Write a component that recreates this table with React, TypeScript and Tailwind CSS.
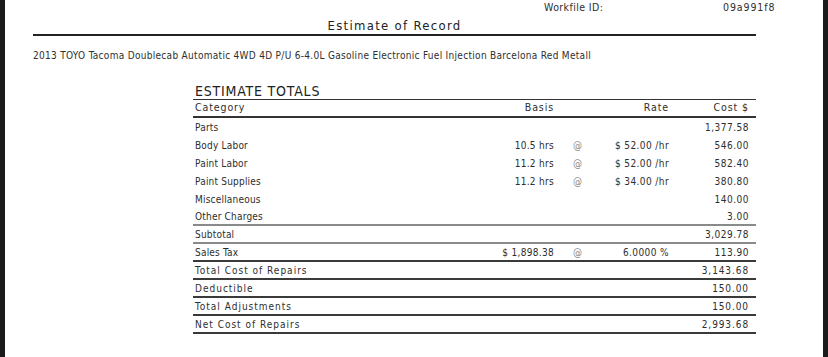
import React from 'react';

type Row = {
  label: string;
  basis?: string;
  at?: boolean;
  rate?: string;
  cost: string;
  line?: 'none' | 'gray' | 'dark';
  wide?: boolean;
};

const ROWS: Row[] = [
  { label: 'Parts', cost: '1,377.58' },
  { label: 'Body Labor', basis: '10.5 hrs', at: true, rate: '$ 52.00 /hr', cost: '546.00' },
  { label: 'Paint Labor', basis: '11.2 hrs', at: true, rate: '$ 52.00 /hr', cost: '582.40' },
  { label: 'Paint Supplies', basis: '11.2 hrs', at: true, rate: '$ 34.00 /hr', cost: '380.80' },
  { label: 'Miscellaneous', cost: '140.00' },
  { label: 'Other Charges', cost: '3.00', line: 'gray' },
  { label: 'Subtotal', cost: '3,029.78', line: 'gray' },
  { label: 'Sales Tax', basis: '$ 1,898.38', at: true, rate: '6.0000 %', cost: '113.90', line: 'dark' },
  { label: 'Total Cost of Repairs', cost: '3,143.68', line: 'dark', wide: true },
  { label: 'Deductible', cost: '150.00', line: 'dark', wide: true },
  { label: 'Total Adjustments', cost: '150.00', line: 'dark', wide: true },
  { label: 'Net Cost of Repairs', cost: '2,993.68', line: 'dark', wide: true },
];

const font = { fontFamily: '"DejaVu Sans Condensed", "Liberation Sans", sans-serif' };

export default function App() {
  return (
    <div className="w-[828px] h-[357px] bg-[#1b1b1b] flex px-[5px] overflow-hidden" style={font}>
      <div className="flex-1 bg-white text-[#2e2e2e] flex flex-col">
        <div className="flex h-[14px] pl-[539px] text-[10.5px] leading-[14px] tracking-[0.4px]">
          <span className="w-[179px]">Workfile ID:</span>
          <span className="tracking-[0.9px]">09a991f8</span>
        </div>
        <div className="ml-[28px] w-[723px] h-[22px] border-b-2 border-[#222] text-center text-[13px] leading-[24px] tracking-[1.3px] text-[#222]">
          Estimate of Record
        </div>
        <div className="ml-[28px] mt-[14px] text-[10px] leading-[12px] tracking-[0.3px] whitespace-nowrap">
          2013 TOYO Tacoma Doublecab Automatic 4WD 4D P/U 6-4.0L Gasoline Electronic Fuel Injection Barcelona Red Metall
        </div>
        <div className="ml-[188px] w-[563px] mt-[21px]">
          <div className="pl-[2px] h-[16px] text-[14px] leading-[16px] tracking-[0.8px] text-[#222]">ESTIMATE TOTALS</div>
          <div className="border-t-[1.5px] border-b-2 border-[#333] grid grid-cols-[281px_80px_40px_75px_80px] h-[19px] items-center text-[10.5px] tracking-[0.9px]">
            <span className="pl-[2px]">Category</span>
            <span className="text-right">Basis</span>
            <span />
            <span className="text-right">Rate</span>
            <span className="text-right">Cost $</span>
          </div>
          {ROWS.map((r) => (
            <div
              key={r.label}
              className={
                'grid grid-cols-[281px_80px_40px_75px_80px] h-[18px] items-center text-[10px] tracking-[0.5px] ' +
                (r.line === 'gray'
                  ? 'border-b-2 border-[#8a8a8a]'
                  : r.line === 'dark'
                  ? 'border-b-2 border-[#3a3a3a]'
                  : '')
              }
            >
              <span className={'pl-[2px] whitespace-nowrap ' + (r.wide ? 'tracking-[1px]' : 'tracking-[0.2px]')}>
                {r.label}
              </span>
              <span className="text-right whitespace-nowrap tracking-[0.3px]">{r.basis}</span>
              <span className="pl-[19px] text-[#888]">{r.at ? '@' : ''}</span>
              <span className="text-right whitespace-nowrap tracking-[0.4px]">{r.rate}</span>
              <span className={'text-right whitespace-nowrap ' + (r.wide ? 'tracking-[0.9px]' : '')}>{r.cost}</span>
            </div>
          ))}
        </div>
      </div>
    </div>
  );
}
